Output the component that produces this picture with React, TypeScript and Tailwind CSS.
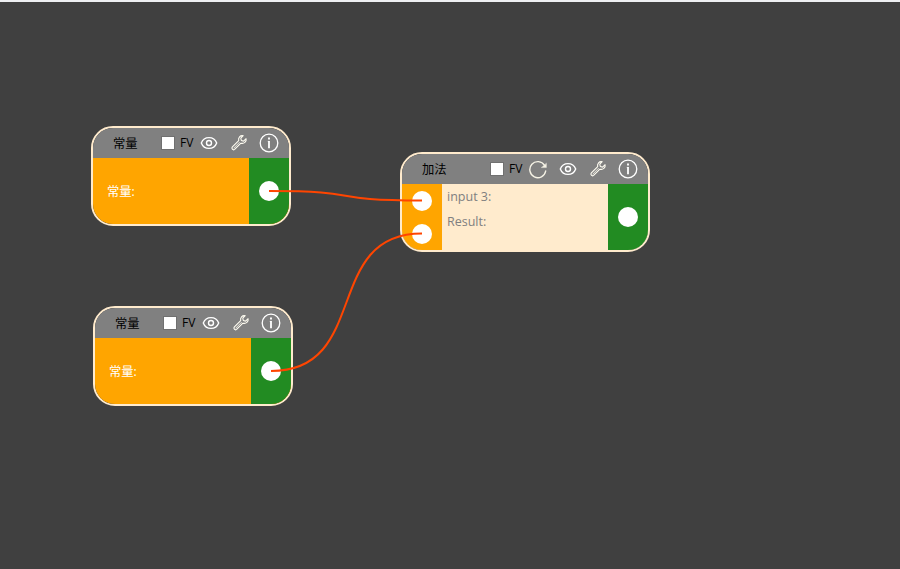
import React from "react";

const stroke = { fill: "none", stroke: "#fff", strokeLinecap: "round", strokeLinejoin: "round" } as const;

function EyeIcon() {
  return (
    <svg width="18" height="18" viewBox="0 0 18 18" {...stroke} strokeWidth="1.4">
      <path d="M1.3 9 C2.6 5.6 5.4 3.6 9 3.6 S15.4 5.6 16.7 9 C15.4 12.4 12.6 14.4 9 14.4 S2.6 12.4 1.3 9Z" />
      <circle cx="9" cy="9" r="2.5" />
    </svg>
  );
}

function WrenchIcon() {
  return (
    <svg width="18" height="18" viewBox="0 0 18 18" {...stroke} stroke="#fffdf2" strokeWidth="1.1">
      <path d="M13.2 1.7 C10.2 1.1 8 3.6 8.7 6.6 L2.4 12.9 C1 14.6 2.9 16.6 4.6 15.4 L10.9 9.2 C13.9 10.1 16.8 7.7 16.1 4.7 L13.6 7.1 L11.3 6.5 L10.8 4.1Z" />
      <path d="M3.9 14 L9.4 8.4" strokeWidth="0.8" />
    </svg>
  );
}

function InfoIcon() {
  return (
    <svg width="20" height="20" viewBox="0 0 20 20" {...stroke} strokeWidth="1.3">
      <circle cx="10" cy="10" r="8.8" />
      <path d="M10 8 V15.2" strokeWidth="1.8" strokeLinecap="butt" />
      <path d="M8.8 8.4 H10.5" strokeWidth="0.9" strokeLinecap="butt" />
      <path d="M10 4.5 V6.4" strokeWidth="1.9" strokeLinecap="butt" />
    </svg>
  );
}

function RefreshIcon() {
  return (
    <svg width="20" height="20" viewBox="0 0 20 20" {...stroke} stroke="#f6f3e6" strokeWidth="1.4">
      <path d="M16.6 6.4 A8 8 0 1 0 17.7 12" />
      <path d="M18.4 4.4 V8.6 H13.6Z" fill="#f6f3e6" strokeWidth="0.4" />
    </svg>
  );
}

function Slot({ children }: { children: React.ReactNode }) {
  return <span className="flex h-[30px] w-[30px] items-center justify-center">{children}</span>;
}

function Header({ title, refresh }: { title: string; refresh?: boolean }) {
  return (
    <header className="flex h-[30px] shrink-0 items-center bg-[#808080] pr-[5px] pl-5 text-black">
      <span className="mr-auto pt-[2px] text-[12.3px] leading-4">{title}</span>
      <span className="mr-[5px] h-[14px] w-[14px] border border-[#707070] bg-white" />
      <span className="w-[14px] text-[12px] leading-4">FV</span>
      {refresh && <Slot><RefreshIcon /></Slot>}
      <Slot><EyeIcon /></Slot>
      <Slot><WrenchIcon /></Slot>
      <Slot><InfoIcon /></Slot>
    </header>
  );
}

function Port() {
  return <span className="h-5 w-5 rounded-full bg-white" />;
}

function OutputPort() {
  return (
    <div className="flex w-10 shrink-0 items-center justify-center bg-[#228b22]">
      <Port />
    </div>
  );
}

const shell = "absolute flex h-[100px] flex-col overflow-hidden rounded-[22px] border-2 border-[#ffebcd]";

function ConstantNode({ place }: { place: string }) {
  return (
    <section className={`${shell} w-[200px] ${place}`}>
      <Header title="常量" />
      <div className="flex flex-1 bg-[#ffa500]">
        <div className="flex flex-1 items-center pt-[2px] pl-[14px] text-[12.3px] leading-4 text-white">常量:</div>
        <OutputPort />
      </div>
    </section>
  );
}

function AdditionNode() {
  return (
    <section className={`${shell} top-[152px] left-[400px] w-[250px]`}>
      <Header title="加法" refresh />
      <div className="flex flex-1 bg-[#ffebcd]">
        <div className="flex w-10 flex-col items-center justify-around bg-[#ffa500]">
          <Port />
          <Port />
        </div>
        <div className="flex flex-1 flex-col gap-[9px] pt-[5px] pl-[5px] text-[12.5px] leading-4 text-[#808080]">
          <span>input 3:</span>
          <span>Result:</span>
        </div>
        <OutputPort />
      </div>
    </section>
  );
}

export default function App() {
  return (
    <main className="relative h-[569px] w-[900px] overflow-hidden border-t-2 border-[#eef0f2] bg-[#404040] font-['Open_Sans','Noto_Sans_CJK_SC',sans-serif]">
      <div className="absolute -top-[2px] left-0 h-[569px] w-[900px]">
        <ConstantNode place="top-[126px] left-[91px]" />
        <ConstantNode place="top-[306px] left-[93px]" />
        <AdditionNode />
        <svg className="absolute inset-0" width="900" height="569" fill="none" stroke="#ff4500" strokeWidth="2">
          <path d="M269 191 C369 191 322 200.5 422 200.5" />
          <path d="M271 371 C371 371 322 233.5 422 233.5" />
        </svg>
      </div>
    </main>
  );
}
